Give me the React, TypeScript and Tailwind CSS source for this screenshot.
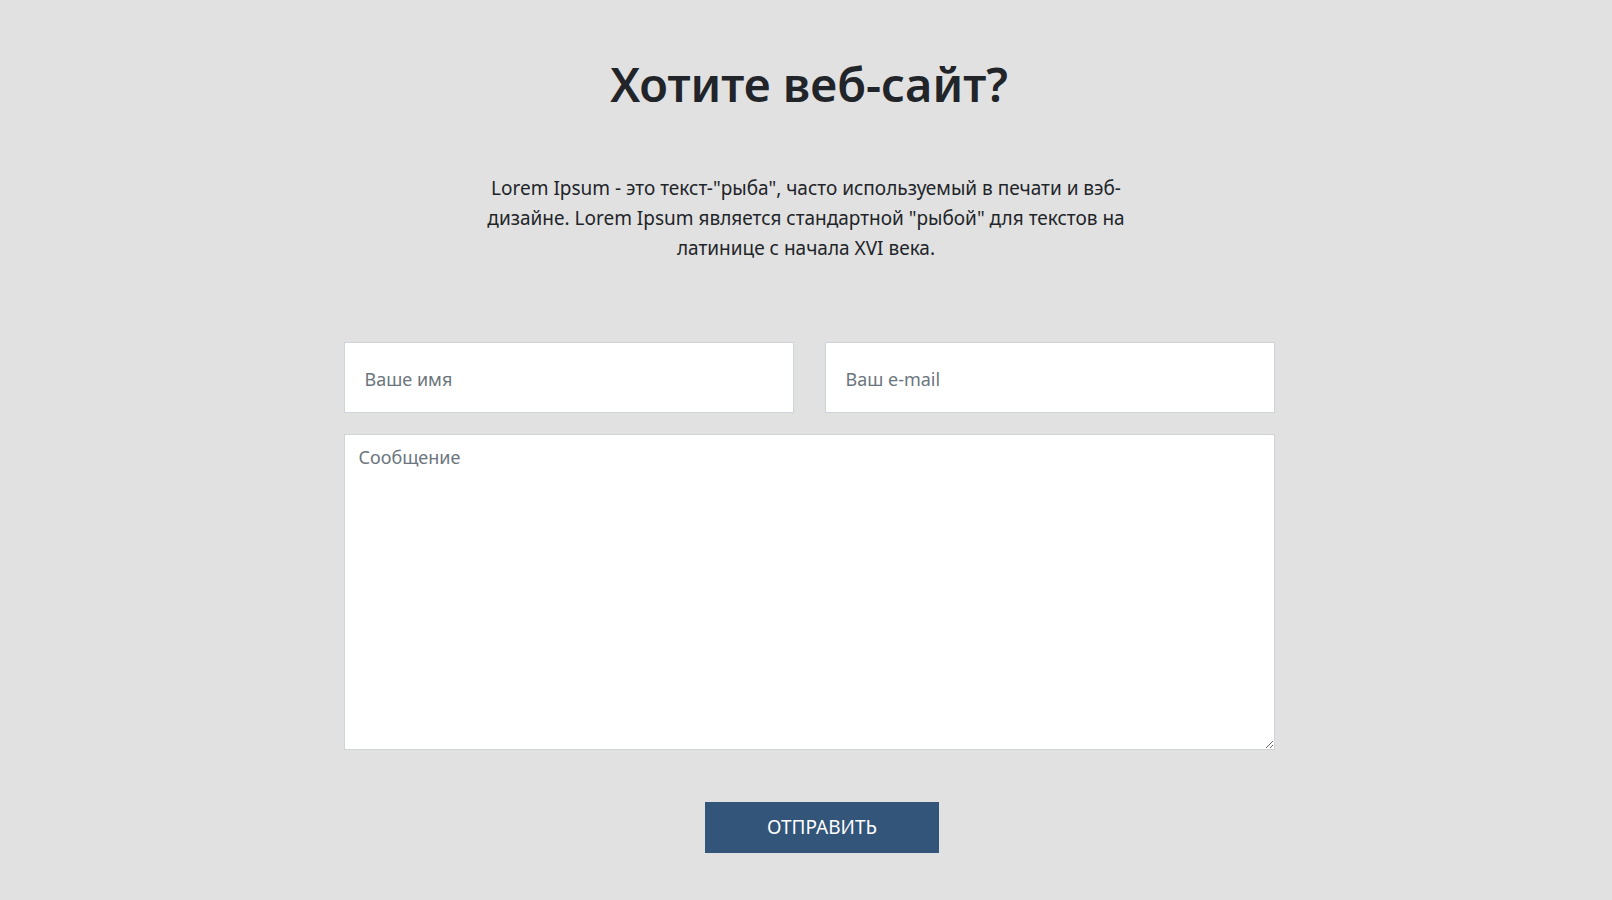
export default function App() {
  return (
    <div
      className="min-h-[900px] bg-[#e1e1e1] text-[#212529]"
      style={{ fontFamily: '"Noto Sans", "Open Sans", sans-serif' }}
    >
      <div className="flex flex-col items-center pt-[55px]">
        <h1 className="pl-[6px] text-[47px] font-semibold leading-[58px]">Хотите веб-сайт?</h1>

        <p className="mt-[60px] w-[660px] text-center text-[19px] leading-[30px]">
          Lorem Ipsum - это текст-"рыба", часто используемый в печати и вэб-дизайне. Lorem
          Ipsum является стандартной "рыбой" для текстов на латинице с начала XVI века.
        </p>
      </div>

      <form className="mx-auto mt-[79px] w-[931px] translate-x-[3px]">
        <div className="grid grid-cols-2 gap-[31px]">
          <input
            type="text"
            placeholder="Ваше имя"
            className="h-[71px] border border-[#ced4da] bg-white px-[20px] pt-[2px] text-[18px] placeholder:text-[#6c757d] focus:outline-none"
          />
          <input
            type="email"
            placeholder="Ваш e-mail"
            className="h-[71px] border border-[#ced4da] bg-white px-[20px] pt-[2px] text-[18px] placeholder:text-[#6c757d] focus:outline-none"
          />
        </div>
        <textarea
          placeholder="Сообщение"
          className="mt-[21px] block h-[316px] w-full border border-[#ced4da] bg-white px-[14px] py-[9px] text-[18px] placeholder:text-[#6c757d] focus:outline-none"
        />
        <div className="mt-[52px] flex justify-center pl-[26px]">
          <button
            type="button"
            className="h-[51px] w-[234px] bg-[#33557a] text-[19px] uppercase text-white"
          >
            Отправить
          </button>
        </div>
      </form>
    </div>
  );
}
